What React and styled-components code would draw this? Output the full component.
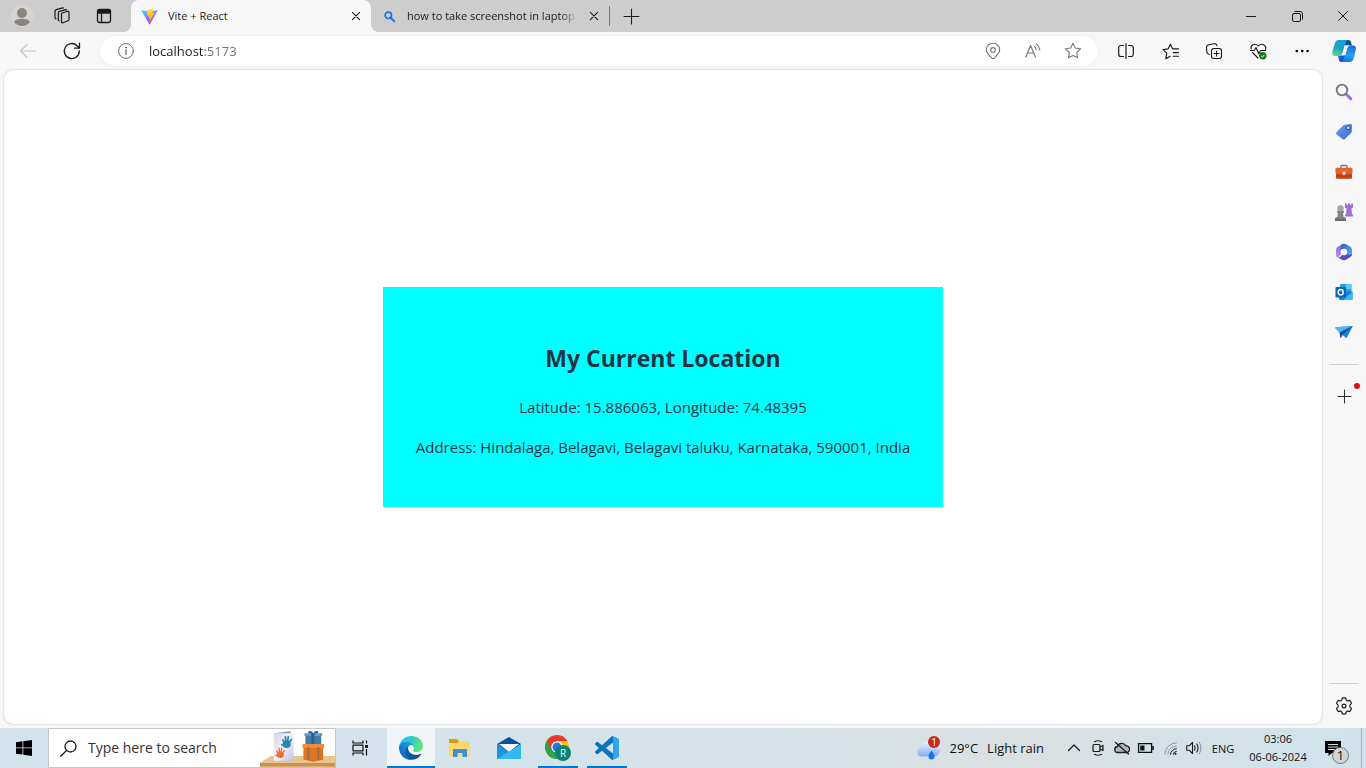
import React from "react";
import styled, { createGlobalStyle, css } from "styled-components";

const GlobalStyle = createGlobalStyle`
  *, *::before, *::after { box-sizing: border-box; }
  body { margin: 0; background: #f7f7f7; }
  button, input { font: inherit; color: inherit; }
  button { padding: 0; border: 0; background: none; }
  h2, p, ul { margin: 0; }
`;

const Window = styled.div`
  display: flex;
  flex-direction: column;
  min-height: 100vh;
  color: #1b1b1b;
  font-family: "Open Sans", "Noto Sans", sans-serif;
  font-size: 11px;
`;

const Svg = styled.svg.attrs({ "aria-hidden": true })`
  display: block;
  flex: none;
  overflow: visible;
  width: ${(p) => p.$w || 20}px;
  height: ${(p) => p.$h || p.$w || 20}px;
`;

const LineSvg = styled(Svg)`
  fill: none;
  stroke: ${(p) => p.$color || "#1b1b1b"};
  stroke-width: ${(p) => p.$stroke || 1};
  stroke-linecap: round;
  stroke-linejoin: round;
`;

const IconButton = styled.button`
  display: flex;
  flex: none;
  align-items: center;
  justify-content: center;
  width: ${(p) => p.$w}px;
  height: ${(p) => p.$h}px;
`;

/* ---------- tab strip ---------- */

const TabStrip = styled.header`
  display: flex;
  align-items: stretch;
  height: 32px;
  background: #cdcdcd;
`;

const StripActions = styled.div`
  display: flex;
  width: 131px;
  padding-left: 2px;
`;

const Tab = styled.div`
  display: flex;
  align-items: center;
  gap: 10px;
  width: ${(p) => (p.$active ? 240 : 238)}px;
  padding: 0 7px 0 10px;
  ${(p) =>
    p.$active &&
    css`
      position: relative;
      background: #f7f7f7;
      border-radius: 8px 8px 0 0;
      &::before,
      &::after {
        content: "";
        position: absolute;
        bottom: 0;
        width: 8px;
        height: 8px;
      }
      &::before {
        left: -8px;
        background: radial-gradient(circle at 0 0, #cdcdcd 8px, #f7f7f7 8px);
      }
      &::after {
        right: -8px;
        background: radial-gradient(circle at 100% 0, #cdcdcd 8px, #f7f7f7 8px);
      }
    `}
`;

const TabTitle = styled.span`
  flex: 1;
  min-width: 0;
  overflow: hidden;
  white-space: nowrap;
  line-height: 16px;
  ${(p) => p.$fade && css`mask-image: linear-gradient(to left, transparent, #000 14px);`}
`;

const TabDivider = styled.div`
  align-self: center;
  width: 1px;
  height: 20px;
  background: #7a7a7a;
`;

const WindowControls = styled.div`
  display: flex;
  margin-left: auto;
`;

/* ---------- toolbar ---------- */

const Toolbar = styled.div`
  display: flex;
  align-items: center;
  height: 36px;
  padding: 2px 2px 0 6px;
  background: #f7f7f7;
`;

const AddressBar = styled.form`
  display: flex;
  flex: 1;
  align-items: center;
  height: 30px;
  margin: 0 6px;
  padding: 0 5px 0 16px;
  border-radius: 15px;
  background: #fff;
  box-shadow: 0 0 2px #e2e2e2;
`;

const AddressInput = styled.input`
  flex: 1;
  min-width: 0;
  height: 24px;
  margin-left: 13px;
  padding: 0;
  border: 0;
  outline: 0;
  font-size: 13px;
  line-height: 24px;
  background: linear-gradient(to right, #1b1b1b 55px, #6f6f6f 55px);
  background-clip: text;
  -webkit-text-fill-color: transparent;
`;

/* ---------- content and sidebar ---------- */

const Body = styled.div`
  display: flex;
  flex: 1;
`;

const Page = styled.main`
  display: flex;
  flex: 1;
  align-items: center;
  justify-content: center;
  margin: 2px 0 4px 4px;
  border-radius: 9px;
  background: #fff;
  box-shadow: 0 0 2px #b4b4b4;
`;

const LocationCard = styled.section`
  padding: 53px 32px 48px;
  background: #0ff;
  color: #213547;
  text-align: center;
  font-size: 15px;
  line-height: 24px;
`;

const LocationTitle = styled.h2`
  margin-bottom: 19px;
  font-size: 23px;
  font-weight: 700;
  line-height: 36px;
`;

const LocationText = styled.p`
  min-width: 496px;
  & + & {
    margin-top: 16px;
  }
`;

const Sidebar = styled.aside`
  display: flex;
  flex-direction: column;
  align-items: center;
  width: 44px;
  padding: 4px 0 2px;
`;

const SidebarRule = styled.hr`
  width: 28px;
  height: 1px;
  margin: ${(p) => (p.$bottom ? "auto 0 2px" : "12px 0 11px")};
  border: 0;
  background: #cfcfcf;
`;

const AddButton = styled(IconButton)`
  position: relative;
`;

const Dot = styled.span`
  position: absolute;
  top: 7px;
  right: 6px;
  width: 6px;
  height: 6px;
  border-radius: 50%;
  background: #e00b0b;
`;

/* ---------- taskbar ---------- */

const Taskbar = styled.footer`
  display: flex;
  align-items: stretch;
  height: 40px;
  background: linear-gradient(to right, #d4e4ec, #d5e3ea 55%, #dbdfe1 76%, #d3e2e9 88%, #cfe2ea);
  color: #111;
`;

const SearchBox = styled.label`
  display: flex;
  align-items: center;
  width: 288px;
  padding-left: 11px;
  border: 1px solid #c3c6c8;
  background: #fff;
`;

const SearchInput = styled.input`
  flex: 1;
  min-width: 0;
  margin-left: 11px;
  padding: 0;
  border: 0;
  outline: 0;
  background: none;
  font-size: 14px;
  line-height: 20px;
  &::placeholder {
    color: #333;
    opacity: 1;
  }
`;

const Apps = styled.nav`
  display: flex;
  gap: 1px;
  margin-left: 3px;
`;

const AppButton = styled.button`
  display: flex;
  align-items: center;
  justify-content: center;
  position: relative;
  width: 48px;
  background: ${(p) => (p.$active ? "#f1f5f8" : "transparent")};
  &::after {
    content: "";
    position: absolute;
    bottom: 0;
    left: ${(p) => (p.$active ? 0 : 4)}px;
    right: ${(p) => (p.$active ? 0 : 4)}px;
    height: 2px;
    background: ${(p) => (p.$running || p.$active ? "#0078d7" : "transparent")};
  }
`;

const Tray = styled.div`
  display: flex;
  align-items: center;
  margin-left: auto;
`;

const Weather = styled.button`
  display: flex;
  align-items: center;
  gap: 9px;
  margin-right: 18px;
  font-size: 13px;
  line-height: 20px;
`;

const Language = styled.button`
  width: 34px;
  font-size: 11px;
`;

const Clock = styled.button`
  width: 76px;
  font-size: 11px;
  line-height: 18px;
  text-align: center;
  white-space: nowrap;
`;

const ClockLine = styled.time`
  display: block;
`;

const Notifications = styled.button`
  display: flex;
  justify-content: center;
  align-items: center;
  position: relative;
  width: 34px;
  height: 40px;
  margin-right: 11px;
`;

const Count = styled.span`
  position: absolute;
  top: 19px;
  left: 16px;
  width: 17px;
  height: 17px;
  border: 1px solid #777;
  border-radius: 50%;
  background: #cfd5d8;
  font-size: 13px;
  line-height: 15px;
  text-align: center;
`;

const ShowDesktop = styled.button`
  width: 5px;
  height: 40px;
  border-left: 1px solid #9fb0b8;
`;

/* ---------- drawings ---------- */

const Avatar = () => (
  <Svg $w={22} viewBox="0 0 22 22">
    <circle cx="11" cy="11" r="10.5" fill="#d6d4d1" stroke="#e0dedb" strokeWidth=".7" />
    <circle cx="11" cy="8" r="5" fill="#8a8580" />
    <path d="M3 17c1-2 4-3.200 8-3.200s7 1.200 8 3.200a10 10 0 0 1-16 0z" fill="#8a8580" />
  </Svg>
);

const Workspaces = () => (
  <LineSvg $w={18} viewBox="0 0 18 18" $stroke={1.2}>
    <path d="M8.500 6.200 14.500 4.300q1.500-.4 1.500 1.100v7.100q0 1-1 1.300l-5 1.900q-1.500.5-1.500-1V7.400q0-.9 0-1.200z" />
    <path d="M13.500 2.800 12.800 2.600 6.500 4.400q-1.200.4-1.200 1.500v6.600q0 1.200.9 1.500" />
    <path d="M10.500 1 9.800.8 3.300 2.600Q2 3 2 4.200v6.300q0 1 .9 1.400" />
  </LineSvg>
);

const TabActions = () => (
  <LineSvg $w={16} viewBox="0 0 16 16" $stroke={1.3}>
    <rect x="1.500" y="1.500" width="13" height="13" rx="2.200" />
    <path d="M2 2h12v3H2z" fill="#1b1b1b" />
    <path d="M5.500 5v9" />
  </LineSvg>
);

const ViteLogo = () => (
  <Svg $w={17} viewBox="1 1 30 30">
    <defs>
      <linearGradient id="vite-a" x1="0" y1="0" x2=".6" y2="1">
        <stop stopColor="#41d1ff" />
        <stop offset="1" stopColor="#bd34fe" />
      </linearGradient>
      <linearGradient id="vite-b" x1="0" y1="0" x2="0" y2="1">
        <stop stopColor="#ffea83" />
        <stop offset=".1" stopColor="#ffdd35" />
        <stop offset="1" stopColor="#ffa800" />
      </linearGradient>
    </defs>
    <path fill="url(#vite-a)" d="M29.880 6.146 16.742 29.646c-.271.485-.968.488-1.244.005L2.096 6.148c-.3-.526.150-1.163.746-1.057l13.156 2.352a.714.714 0 0 0 .254 0l12.880-2.348c.594-.108 1.046.524.752 1.051z" />
    <path fill="url(#vite-b)" d="m22.264 2.007-9.725 1.906a.357.357 0 0 0-.288.329l-.598 10.104c-.014.238.204.423.437.369l2.707-.625c.254-.058.483.165.431.420l-.805 3.939c-.054.265.195.492.454.413l1.672-.508c.260-.079.509.149.453.414l-1.278 6.188c-.080.387.435.598.650.266L16.517 25l7.925-15.815c.132-.265-.096-.567-.387-.511l-2.787.538c-.262.051-.485-.193-.411-.450l1.819-6.306c.074-.256-.150-.501-.412-.449z" />
  </Svg>
);

const Close = ({ size = 8, stroke = 1.4 }) => (
  <LineSvg $w={size} viewBox="0 0 10 10" $stroke={stroke}>
    <path d="M.5.500l9 9M9.500.500l-9 9" />
  </LineSvg>
);

const Plus = ({ size = 14 }) => (
  <LineSvg $w={size} viewBox="0 0 14 14">
    <path d="M7 0v14M0 7h14" />
  </LineSvg>
);

const BlueSearch = () => (
  <LineSvg $w={11} viewBox="0 0 11 11" $color="#1477d4" $stroke={1.6}>
    <circle cx="4.300" cy="4.300" r="3.200" />
    <path d="m6.800 6.800 3.400 3.400" strokeWidth="2" />
  </LineSvg>
);

const Minimise = () => (
  <LineSvg $w={10} viewBox="0 0 10 10">
    <path d="M.5 5.500h9" />
  </LineSvg>
);

const Restore = () => (
  <LineSvg $w={11} viewBox="0 0 11 11">
    <rect x=".5" y="2.500" width="8" height="8" rx="1.500" />
    <path d="M2.800.500H8a2.500 2.500 0 0 1 2.500 2.500v5.200" />
  </LineSvg>
);

const Back = () => (
  <LineSvg $w={16} viewBox="0 0 16 16" $color="#c4c4c4" $stroke={1.2}>
    <path d="M15.500 8H1M7 1.500.500 8 7 14.500" />
  </LineSvg>
);

const Reload = () => (
  <LineSvg $w={18} viewBox="0 0 18 18" $stroke={1.3}>
    <path d="M16.300 9a7.500 7.500 0 1 1-2.200-5.300l2 2M16.500 1.200v5h-5" />
  </LineSvg>
);

const Info = () => (
  <LineSvg $w={16} viewBox="0 0 16 16" $color="#6b6b6b">
    <circle cx="8" cy="8" r="7.400" />
    <path d="M8 7v4.500" strokeWidth="1.300" />
    <circle cx="8" cy="4.700" r=".4" fill="#6b6b6b" />
  </LineSvg>
);

const Pin = () => (
  <LineSvg $w={16} viewBox="0 0 16 16" $color="#767676" $stroke={1.1}>
    <path d="M8 15.500c-.6 0-1-.3-1.400-.7C3.500 11.800 1.300 9.700 1.300 6.900a6.700 6.700 0 0 1 13.400 0c0 2.800-2.200 4.900-5.300 7.900-.4.4-.8.700-1.400.7z" />
    <circle cx="8" cy="6.900" r="2.300" />
  </LineSvg>
);

const ReadAloud = () => (
  <LineSvg $w={16} viewBox="0 0 16 16" $color="#767676" $stroke={1.2}>
    <path d="M.8 14 5.600 2.500 10.500 14M2.500 10h6.200M9.500 3.500q1.400 1 1.600 3M11.500 1q3 2.400 3.300 6" />
  </LineSvg>
);

const STAR = "M9 1.200 11.300 6l5.200.8-3.800 3.700.9 5.300L9 13.400l-4.600 2.400.9-5.300L1.500 6.800 6.700 6z";

const Star = () => (
  <LineSvg $w={18} viewBox="0 0 18 18" $color="#767676" $stroke={1.1}>
    <path d={STAR} />
  </LineSvg>
);

const SplitScreen = () => (
  <LineSvg $w={16} viewBox="0 0 16 16" $stroke={1.2}>
    <path d="M5.500 2.500H3A2.300 2.300 0 0 0 .7 4.800v6.400A2.300 2.300 0 0 0 3 13.500h2.500M10.500 2.500H13a2.300 2.300 0 0 1 2.300 2.300v6.400a2.300 2.300 0 0 1-2.300 2.300h-2.500M8 .500v15" />
  </LineSvg>
);

const Favourites = () => (
  <LineSvg $w={17} viewBox="0 0 16 16" $stroke={1.1}>
    <path d="M10 5.500 7.900 1.200 5.800 5.500 1 6.200l3.500 3.400-.9 5.200 4-2.300M10.500 9h5M10.500 12.500h5M10 5.500h5.500" />
  </LineSvg>
);

const Collections = () => (
  <LineSvg $w={16} viewBox="0 0 16 16" $stroke={1.1}>
    <rect x="5.500" y="5.500" width="10" height="10" rx="2.200" />
    <path d="M10.500 8v5M8 10.500h5M3.300 11.500l-1-.6A3 3 0 0 1 .8 9L.5 4.600A2.800 2.800 0 0 1 2.700 1.800L8 .700a2.500 2.500 0 0 1 3 2" />
  </LineSvg>
);

const BrowserHealth = () => (
  <Svg $w={17} viewBox="0 0 17 17">
    <g fill="none" stroke="#1b1b1b" strokeWidth="1.100" strokeLinecap="round" strokeLinejoin="round">
      <path d="M1.200 6C0 2.500 4.500-.5 8.300 2.800 12-.5 17 2.500 15.500 6.500M2.500 9.500 8 15" />
      <path d="M.5 7.500h3.700L6 4.500l2.800 6.200 1.800-3.200h5" />
    </g>
    <circle cx="12.800" cy="12.800" r="3.700" fill="#107c10" />
    <path d="m11.200 13 1.200 1.100 2-2.300" fill="none" stroke="#fff" />
  </Svg>
);

const More = () => (
  <Svg $w={14} $h={4} viewBox="0 0 14 4">
    <circle cx="1.800" cy="2" r="1.300" />
    <circle cx="7.200" cy="2" r="1.300" />
    <circle cx="12.600" cy="2" r="1.300" />
  </Svg>
);

const Copilot = () => (
  <Svg $w={24} viewBox="0 0 24 24">
    <defs>
      <linearGradient id="cp-a" x1=".6" y1="0" x2=".2" y2="1">
        <stop stopColor="#1c9fe0" />
        <stop offset=".5" stopColor="#14a5b8" />
        <stop offset="1" stopColor="#6ed58d" />
      </linearGradient>
      <linearGradient id="cp-b" x1=".7" y1="0" x2=".4" y2="1">
        <stop stopColor="#1d6fe0" />
        <stop offset=".6" stopColor="#1da5f2" />
        <stop offset="1" stopColor="#1c6ce0" />
      </linearGradient>
    </defs>
    <path fill="#0c4f83" d="M12 1h4.500q1.800 0 2.300 1.500L20 6.500h-7z" />
    <path fill="url(#cp-a)" d="M6.500 1H16q-1.800.4-2.600 3l-3.200 10.500Q9.500 17 7 17H3Q-.6 17 .3 12.500L3 4q.9-3 3.500-3z" />
    <path fill="#1752db" d="M6.300 17H7q2.400 0 3.200-1.500h3.300L12 21q-.7 2-3 2-1.600 0-2-2z" />
    <path fill="url(#cp-b)" d="M17.500 23H9q2-.4 2.700-3l3.600-11.500Q16 6.500 18 6.500h3q3.800 0 2.800 4.500L21.500 20q-1 3-4 3z" />
    <path fill="#f7f7f7" d="M13.300 6.500h5q-2 .2-2.700 2l-2.100 6.800q-.3 1.200-1.400 1.200H9.200q.9-.8 1.300-2z" />
  </Svg>
);

const SideSearch = () => (
  <Svg $w={18} viewBox="0 0 18 18">
    <path d="m11.500 11.500 4.300 4.300" stroke="#a06be0" strokeWidth="3" strokeLinecap="round" />
    <circle cx="7" cy="7" r="5.300" fill="none" stroke="#767676" strokeWidth="1.800" />
  </Svg>
);

const Tag = () => (
  <Svg $w={18} viewBox="0 0 18 18">
    <defs>
      <linearGradient id="tag" x1="0" y1="0" x2="1" y2="1">
        <stop stopColor="#6ea0ee" />
        <stop offset="1" stopColor="#3868cf" />
      </linearGradient>
    </defs>
    <path fill="url(#tag)" d="M9.500 1.800 15.800 1q1.200 0 1.200 1.200l-.2 6.300q0 .7-.5 1.200l-6.400 6.300q-1.200 1.200-2.400 0L1.600 11.500q-1.200-1.200 0-2.400l6.600-6.700q.6-.5 1.300-.6z" />
    <circle cx="13.200" cy="4.800" r="1.800" fill="#dbe7ff" stroke="#244b9b" />
  </Svg>
);

const Toolbox = () => (
  <Svg $w={18} viewBox="0 0 18 18">
    <path d="M6 5V3.500q0-1 1-1h4q1 0 1 1V5" fill="none" stroke="#777" strokeWidth="1.400" />
    <rect x=".5" y="4.800" width="17" height="5.500" rx="1" fill="#e4622b" />
    <path d="M1 10.300h16v4.200q0 1.300-1.300 1.300H2.300Q1 15.800 1 14.500z" fill="#c93d0f" />
    <rect x="7.500" y="8.500" width="3" height="3.500" rx="1" fill="#dadada" />
  </Svg>
);

const Games = () => (
  <Svg $w={20} viewBox="0 0 20 20">
    <path d="M11 1.500h1.700V3H14V1.500h2V3h1.300V1.500H19v4l-1.500 1 .5 6h1v2h-8v-2h1l.5-6-1.500-1z" fill="#a56bdc" />
    <circle cx="6.500" cy="6.500" r="3.200" fill="#a4a4a4" />
    <path d="M3 9h7v1.800H9l.6 4.200h1.300q1 .4 1.100 4H1q0-3.600 1.100-4h1.300l.6-4.200H3z" fill="#858585" />
    <path d="M1 16.500h11V19H1z" fill="#6b6b6b" />
  </Svg>
);

const M365 = () => (
  <Svg $w={18} viewBox="0 0 18 18">
    <defs>
      <linearGradient id="m-a" x1="0" y1="0" x2="0" y2="1">
        <stop stopColor="#7d70dd" />
        <stop offset="1" stopColor="#c58ae6" />
      </linearGradient>
      <linearGradient id="m-b" x1="0" y1="0" x2="1" y2="1">
        <stop stopColor="#2c55c9" />
        <stop offset="1" stopColor="#4cc3f5" />
      </linearGradient>
    </defs>
    <path d="M7.500 1 2.800 3.800Q1 4.900 1 7v5q0 2 1.800 2.500L9 9z" fill="url(#m-a)" />
    <path d="M6 2q1.500-1.900 4.500-1l4.900 2.800Q17 4.900 17 7v4q0 1.500-1 2.500L9 9 5.500 6.500z" fill="url(#m-b)" />
    <path d="M17 10.500q0 2.500-1.600 3.500l-4.900 2.900q-1.500.8-3 0l-4.700-2.500q2.500 0 3.700-1.700L9 9l5.500 3z" fill="#6049bd" />
    <circle cx="9" cy="9" r="3.300" fill="#f7f7f7" />
  </Svg>
);

const Outlook = () => (
  <Svg $w={18} viewBox="0 0 18 18">
    <rect x="5" y="1" width="11.500" height="10" rx="1" fill="#2c9be6" />
    <path d="M11 1h5.500v5H11z" fill="#50d0f5" />
    <path d="M4 8.500h13.500V16q0 1-1 1H5q-1 0-1-1z" fill="#1683d9" />
    <path d="m17.500 8.500-9 8.500h8q1 0 1-1z" fill="#35bdef" />
    <rect x=".5" y="4" width="10.500" height="10.500" rx="1" fill="#0c63bd" />
    <ellipse cx="5.700" cy="9.200" rx="2.500" ry="2.700" fill="none" stroke="#fff" strokeWidth="1.400" />
  </Svg>
);

const Drop = () => (
  <Svg $w={18} viewBox="0 0 18 18">
    <path d="M.8 4.200 17.300 3q.6 0 .3.600L12 14.500q-.5.800-1.200.2L7.500 12 6 14.500q-.7.500-.7-.5L4.600 9.500.5 5.200q-.4-.8.300-1z" fill="#1b86d8" />
    <path d="M17.300 3 .8 4.200q-.7.200-.3 1l4.100 4.300z" fill="#48b6f2" />
    <path d="M17.500 3.200 7.500 12 6 14.500q-.7.500-.7-.5L4.600 9.500z" fill="#0c549c" />
  </Svg>
);

const Gear = () => (
  <LineSvg $w={18} viewBox="0 0 18 18" $stroke={1.2}>
    <circle cx="9" cy="9" r="1.900" />
    <path d="M7.300 1.200q1.700-.5 3.400 0l.5 1.800q.5 1 1.600.9l1.900-.5q1.200 1.200 1.800 3l-1.400 1.400q-.7 1.200 0 2.400l1.400 1.400q-.6 1.800-1.800 3l-1.900-.5q-1.100-.1-1.600.9l-.5 1.800q-1.700.5-3.400 0L6.800 15q-.5-1-1.600-.9l-1.900.5q-1.200-1.200-1.800-3l1.400-1.400q.7-1.200 0-2.400L1.500 6.400q.6-1.800 1.800-3l1.900.5q1.100.1 1.600-.9z" />
  </LineSvg>
);

const WindowsLogo = () => (
  <Svg $w={16} viewBox="0 0 16 16">
    <path d="M0 2.200 6.500 1.300v6.200H0zM7.300 1.200 16 0v7.500H7.300zM0 8.300h6.500v6.300L0 13.700zM7.300 8.300H16V16l-8.700-1.300z" />
  </Svg>
);

const SearchGlass = () => (
  <LineSvg $w={17} viewBox="0 0 17 17" $stroke={1.3}>
    <circle cx="10.500" cy="6.500" r="5.500" />
    <path d="M6.500 10.500.700 16.200" />
  </LineSvg>
);

const HAND = "M-3.500-2 -2 .5M-1.200-4.800-.6 0M1.500-4.700.8 0M4.300-2.500 2 1M-4.500 2.500-1 2";

const GiftShelf = () => (
  <Svg $w={75} $h={38} viewBox="0 0 76 38">
    <defs>
      <linearGradient id="card" x1="0" y1="0" x2="1" y2="1">
        <stop stopColor="#d8d2ee" />
        <stop offset=".5" stopColor="#f3f1fc" />
        <stop offset="1" stopColor="#c6bde6" />
      </linearGradient>
    </defs>
    <path d="M11 27h65v7H0z" fill="#eac58c" />
    <path d="M0 34h76v4H0z" fill="#c9924e" />
    <path d="m14 4 17-2v2l-12 2z" fill="#7e9aa8" />
    <path d="M14 4h20v28l-20 0z" fill="url(#card)" />
    <g fill="#2289aa" stroke="#2289aa" strokeWidth="1.600" strokeLinecap="round" transform="translate(27 13) scale(1.1)">
      <path d={HAND} />
      <ellipse cx="0" cy="2" rx="3" ry="2.600" />
    </g>
    <g fill="#e8712d" stroke="#e8712d" strokeWidth="1.400" strokeLinecap="round" transform="translate(20.500 24)">
      <path d={HAND} />
      <ellipse cx="0" cy="2" rx="3" ry="2.400" />
    </g>
    <path d="M44 17h20v14l-10 2-10-2z" fill="#dc7420" />
    <path d="M43 15h22v4H43z" fill="#f08b37" />
    <path d="M46 5h16v10H46z" fill="#447ba4" />
    <path d="M45 4h18v3H45z" fill="#5d9bc7" />
    <path d="M52 4h3v11h-3zM54 4Q48 5 49 2q3-1 5 2 2-3 5-2 1 3-5 2z" fill="#285e8c" />
    <path d="M48 18h2v13h-2zM58 18h2v13h-2z" fill="#9c6b49" />
  </Svg>
);

const TaskView = () => (
  <LineSvg $w={17} $h={16} viewBox="0 0 17 16" $stroke={1.2} $color="#111">
    <path d="M1 .500v2.500h10V.500M1 15.500V13h10v2.500M1 5.200h10v5.600H1zM14.500.500v3M14.500 9v6.500" strokeLinecap="butt" />
    <path d="M13 5h3v3h-3z" fill="#111" stroke="none" />
  </LineSvg>
);

const EdgeLogo = () => (
  <Svg $w={24} viewBox="0 0 256 256">
    <defs>
      <linearGradient id="ed-a" x1=".2" y1=".5" x2="1" y2=".6">
        <stop stopColor="#0c59a4" />
        <stop offset="1" stopColor="#114a8b" />
      </linearGradient>
      <linearGradient id="ed-b" x1=".8" y1=".2" x2=".2" y2="1">
        <stop stopColor="#1b9de2" />
        <stop offset=".5" stopColor="#1280d1" />
        <stop offset="1" stopColor="#0b5cb0" />
      </linearGradient>
      <linearGradient id="ed-c" x1="0" y1=".3" x2="1" y2=".6">
        <stop stopColor="#35c1f1" />
        <stop offset=".45" stopColor="#2fc8cc" />
        <stop offset="1" stopColor="#66eb6e" />
      </linearGradient>
    </defs>
    <path fill="url(#ed-a)" d="M231 190.500c-3.400 1.800-6.900 3.400-10.500 4.700a101.500 101.500 0 0 1-35.900 6.400c-47.300 0-88.500-32.500-88.500-74.300 0-11.400 6.400-21.900 16.400-27.300-42.800 1.800-53.800 46.400-53.800 72.500 0 74 68.100 81.400 82.800 81.400 7.900 0 19.800-2.300 27-4.600l1.300-.4a128.300 128.300 0 0 0 66.600-52.800 4 4 0 0 0-5.400-5.600z" />
    <path fill="url(#ed-b)" d="M105.700 241.400a79.200 79.200 0 0 1-22.700-21.300 80.700 80.700 0 0 1 29.500-120c3.200-1.500 8.500-4.100 15.600-4a32.400 32.400 0 0 1 25.700 13 31.900 31.900 0 0 1 6.300 18.700c0-.2 24.500-79.600-80-79.600-43.900 0-80 41.600-80 78.200a130.200 130.200 0 0 0 12.100 56 128 128 0 0 0 156.400 67 75.500 75.500 0 0 1-62.800-8z" />
    <path fill="url(#ed-c)" d="M152.300 148.900c-.8 1-3.300 2.500-3.300 5.700 0 2.600 1.700 5.200 4.800 7.300 14.400 10.100 41.700 8.700 41.700 8.700 10.700 0 21.300-2.900 30.500-8.300A61.900 61.900 0 0 0 256.400 108.900c.3-22.400-8-37.300-11.300-43.900C223.900 23.500 178 0 128 0 58 0 1 56 .1 126.200c.5-36.500 36.800-66 80-66 3.500 0 23.500.3 42 10 16.300 8.600 24.900 19 30.800 29.300 6.200 10.700 7.300 24.100 7.300 29.500 0 5.300-2.700 13.300-7.900 19.900z" />
  </Svg>
);

const Explorer = () => (
  <Svg $w={22} $h={20} viewBox="0 0 22 20">
    <path d="M0 1.500Q0 1 .5 1H8l2 2v4H0z" fill="#dc9b0c" />
    <path d="M0 5h9l1.500-2H21v15.500H0z" fill="#ffd869" />
    <path d="M4 19v-7q0-1 1-1h12q1 0 1 1v7h-4.500v-4h-5v4z" fill="#3b8fd8" />
  </Svg>
);

const Mail = () => (
  <Svg $w={24} viewBox="0 0 24 24">
    <path d="M0 8 12 1l12 7-12 9z" fill="#0f4f9e" />
    <path d="M2 8h20l-10 8z" fill="#f6f8fa" />
    <path d="M0 8l12 8.500L24 8v15H0z" fill="#1c93e3" />
    <path d="M0 23 24 8v15z" fill="#35b8f0" />
  </Svg>
);

const Chrome = () => (
  <Svg $w={26} viewBox="0 0 26 26">
    <circle cx="12" cy="12" r="12" fill="#fbc116" />
    <path d="M12 12 1.600 6a12 12 0 0 0 10.400 18l5.200-9z" fill="#2da14c" />
    <path d="M1.600 6A12 12 0 0 1 22.400 6H12L6.800 15z" fill="#e33b2e" />
    <circle cx="12" cy="12" r="5.700" fill="#fff" />
    <circle cx="12" cy="12" r="4.500" fill="#2f74e4" />
    <circle cx="18" cy="18" r="8" fill="#0b8272" />
    <text x="18" y="21.500" fill="#e9fffa" fontSize="10" textAnchor="middle">R</text>
  </Svg>
);

const VsCode = () => (
  <Svg $w={24} viewBox="0 0 24 24">
    <defs>
      <linearGradient id="vs" x1="0" y1="0" x2="1" y2="0">
        <stop stopColor="#0a70b8" />
        <stop offset=".73" stopColor="#0878bf" />
        <stop offset=".76" stopColor="#2aa1ea" />
        <stop offset="1" stopColor="#30a9f2" />
      </linearGradient>
    </defs>
    <path fill="url(#vs)" d="M23.150 2.587 18.210.210a1.494 1.494 0 0 0-1.705.290l-9.460 8.630-4.120-3.128a.999.999 0 0 0-1.276.057L.327 7.261A1 1 0 0 0 .326 8.740L3.899 12 .326 15.260a1 1 0 0 0 .001 1.479L1.650 17.940a.999.999 0 0 0 1.276.057l4.120-3.128 9.460 8.630a1.492 1.492 0 0 0 1.704.290l4.942-2.377A1.500 1.500 0 0 0 24 20.060V3.939a1.500 1.500 0 0 0-.850-1.352zm-5.146 14.861L10.826 12l7.178-5.448v10.896z" />
  </Svg>
);

const RainCloud = () => (
  <Svg $w={24} viewBox="0 0 24 24">
    <defs>
      <linearGradient id="cloud" x1="0" y1="0" x2="0" y2="1">
        <stop stopColor="#e8f1ff" />
        <stop offset="1" stopColor="#83aef4" />
      </linearGradient>
    </defs>
    <path d="M5 20.500a5 5 0 0 1-.5-9.500 7 7 0 0 1 12.500-2 5.800 5.800 0 0 1 2 11.500z" fill="url(#cloud)" />
    <path d="M15.500 14.500q3 3.800 3 6a3 3 0 0 1-6 0q0-2.200 3-6z" fill="#1778e6" />
    <circle cx="18" cy="6" r="6" fill="#c42b1c" />
    <text x="18" y="9.500" fill="#fff" fontSize="10" textAnchor="middle">1</text>
  </Svg>
);

const Chevron = () => (
  <LineSvg $w={12} viewBox="0 0 12 12" $stroke={1.3}>
    <path d="m.5 8.500 5.500-5.500 5.500 5.500" />
  </LineSvg>
);

const MeetNow = () => (
  <LineSvg $w={12} $h={16} viewBox="0 0 12 16" $stroke={1.2}>
    <rect x="1" y="4.500" width="7" height="7" rx="1" />
    <path d="m8 7 3-1.500v5L8 9M2.500 1.700Q6-.2 9.500 1.700M2.500 14.300q3.500 1.900 7 0" />
  </LineSvg>
);

const CloudOff = () => (
  <LineSvg $w={16} $h={14} viewBox="0 0 16 14" $stroke={1.3}>
    <path d="M4 11.500a3 3 0 0 1-.5-6 4.500 4.500 0 0 1 8.300-.6 3.300 3.300 0 0 1 .7 6.600z" fill="#b3b7ba" />
    <path d="m1.500 1.500 13 11.500" />
  </LineSvg>
);

const Battery = () => (
  <Svg $w={16} $h={10} viewBox="0 0 16 10">
    <path d="M.600.600h13v8.800H.600z" fill="none" stroke="#111" strokeWidth="1.300" />
    <path d="M2.300 2.500h4.200v5H2.300zM14.200 3h1.600v4h-1.600z" fill="#111" />
  </Svg>
);

const Wifi = () => (
  <LineSvg $w={13} viewBox="0 0 13 13" $color="#8b979d">
    <path d="M.8 12A11.500 11.500 0 0 1 12.300.800M3.800 12.300a8.500 8.500 0 0 1 8.500-8.300" />
    <path d="M6.500 12.300a5.800 5.800 0 0 1 5.800-5.600M9.300 12.300a3 3 0 0 1 3-2.900" stroke="#111" />
    <circle cx="11.500" cy="11.700" r="1" fill="#111" stroke="none" />
  </LineSvg>
);

const Speaker = () => (
  <LineSvg $w={16} $h={14} viewBox="0 0 16 14" $stroke={1.1}>
    <path d="M.7 4.800h2.500L6.500 1.500v11L3.200 9.200H.7zM8.500 4.800q1.300 2.200 0 4.400M10.800 3q2.500 4 0 8" />
    <path d="M13.200 1.200q3.500 5.800 0 11.600" stroke="#8b979d" />
  </LineSvg>
);

const Message = () => (
  <Svg $w={16} viewBox="0 0 16 16">
    <path d="M0 1h16v12H7l-3.500 3V13H0z" />
    <path d="M3 4.500h10M3 7h10M3 9.500h7" stroke="#cfe2ea" />
  </Svg>
);

/* ---------- data ---------- */

const TOOLBAR_ITEMS = [
  ["Split screen", SplitScreen],
  ["Favourites", Favourites],
  ["Collections", Collections],
  ["Browser essentials", BrowserHealth],
  ["Settings and more", More],
];

const SIDEBAR_ITEMS = [
  ["Search", SideSearch],
  ["Shopping", Tag],
  ["Tools", Toolbox],
  ["Games", Games],
  ["Microsoft 365", M365],
  ["Outlook", Outlook],
  ["Drop", Drop],
];

const APPS = [
  { name: "Microsoft Edge", Icon: EdgeLogo, active: true },
  { name: "File Explorer", Icon: Explorer },
  { name: "Mail", Icon: Mail },
  { name: "Google Chrome", Icon: Chrome, running: true },
  { name: "Visual Studio Code", Icon: VsCode, running: true },
];

const TRAY_ITEMS = [
  ["Show hidden icons", Chevron],
  ["Meet Now", MeetNow],
  ["OneDrive", CloudOff],
  ["Battery", Battery],
  ["Network", Wifi],
  ["Volume", Speaker],
];

export default function App() {
  return (
    <Window>
      <GlobalStyle />
      <TabStrip>
        <StripActions>
          <IconButton $w={40} $h={32} aria-label="Profile"><Avatar /></IconButton>
          <IconButton $w={40} $h={32} aria-label="Workspaces"><Workspaces /></IconButton>
          <IconButton $w={44} $h={32} aria-label="Tab actions"><TabActions /></IconButton>
        </StripActions>
        <Tab $active>
          <ViteLogo />
          <TabTitle>Vite + React</TabTitle>
          <IconButton $w={16} $h={16} aria-label="Close tab"><Close /></IconButton>
        </Tab>
        <Tab>
          <IconButton as="span" $w={16} $h={16}><BlueSearch /></IconButton>
          <TabTitle $fade>how to take screenshot in laptop</TabTitle>
          <IconButton $w={16} $h={16} aria-label="Close tab"><Close /></IconButton>
        </Tab>
        <TabDivider />
        <IconButton $w={42} $h={32} aria-label="New tab"><Plus size={15} /></IconButton>
        <WindowControls>
          <IconButton $w={46} $h={32} aria-label="Minimise"><Minimise /></IconButton>
          <IconButton $w={46} $h={32} aria-label="Restore"><Restore /></IconButton>
          <IconButton $w={46} $h={32} aria-label="Close"><Close size={10} stroke={1} /></IconButton>
        </WindowControls>
      </TabStrip>

      <Toolbar>
        <IconButton $w={44} $h={30} aria-label="Back"><Back /></IconButton>
        <IconButton $w={44} $h={30} aria-label="Refresh"><Reload /></IconButton>
        <AddressBar>
          <IconButton type="button" $w={20} $h={24} aria-label="Site information"><Info /></IconButton>
          <AddressInput aria-label="Address" defaultValue="localhost:5173" />
          <IconButton type="button" $w={40} $h={24} aria-label="Location"><Pin /></IconButton>
          <IconButton type="button" $w={40} $h={24} aria-label="Read aloud"><ReadAloud /></IconButton>
          <IconButton type="button" $w={40} $h={24} aria-label="Add to favourites"><Star /></IconButton>
        </AddressBar>
        {TOOLBAR_ITEMS.map(([name, Icon]) => (
          <IconButton key={name} $w={44} $h={30} aria-label={name}><Icon /></IconButton>
        ))}
        <IconButton $w={40} $h={30} aria-label="Copilot"><Copilot /></IconButton>
      </Toolbar>

      <Body>
        <Page>
          <LocationCard>
            <LocationTitle>My Current Location</LocationTitle>
            <LocationText>Latitude: 15.886063, Longitude: 74.48395</LocationText>
            <LocationText>Address: Hindalaga, Belagavi, Belagavi taluku, Karnataka, 590001, India</LocationText>
          </LocationCard>
        </Page>
        <Sidebar>
          {SIDEBAR_ITEMS.map(([name, Icon]) => (
            <IconButton key={name} $w={44} $h={40} aria-label={name}><Icon /></IconButton>
          ))}
          <SidebarRule />
          <AddButton $w={44} $h={40} aria-label="Customise">
            <Plus size={13} />
            <Dot />
          </AddButton>
          <SidebarRule $bottom />
          <IconButton $w={44} $h={40} aria-label="Settings"><Gear /></IconButton>
        </Sidebar>
      </Body>

      <Taskbar>
        <IconButton $w={48} $h={40} aria-label="Start"><WindowsLogo /></IconButton>
        <SearchBox>
          <SearchGlass />
          <SearchInput aria-label="Search" placeholder="Type here to search" />
          <GiftShelf />
        </SearchBox>
        <IconButton $w={48} $h={40} aria-label="Task view"><TaskView /></IconButton>
        <Apps>
          {APPS.map(({ name, Icon, active, running }) => (
            <AppButton key={name} $active={active} $running={running} aria-label={name}><Icon /></AppButton>
          ))}
        </Apps>
        <Tray>
          <Weather>
            <RainCloud />
            <span>29°C</span>
            <span>Light rain</span>
          </Weather>
          {TRAY_ITEMS.map(([name, Icon]) => (
            <IconButton key={name} $w={24} $h={40} aria-label={name}><Icon /></IconButton>
          ))}
          <Language>ENG</Language>
          <Clock>
            <ClockLine>03:06</ClockLine>
            <ClockLine>06-06-2024</ClockLine>
          </Clock>
          <Notifications aria-label="Notifications">
            <Message />
            <Count>1</Count>
          </Notifications>
          <ShowDesktop aria-label="Show desktop" />
        </Tray>
      </Taskbar>
    </Window>
  );
}
